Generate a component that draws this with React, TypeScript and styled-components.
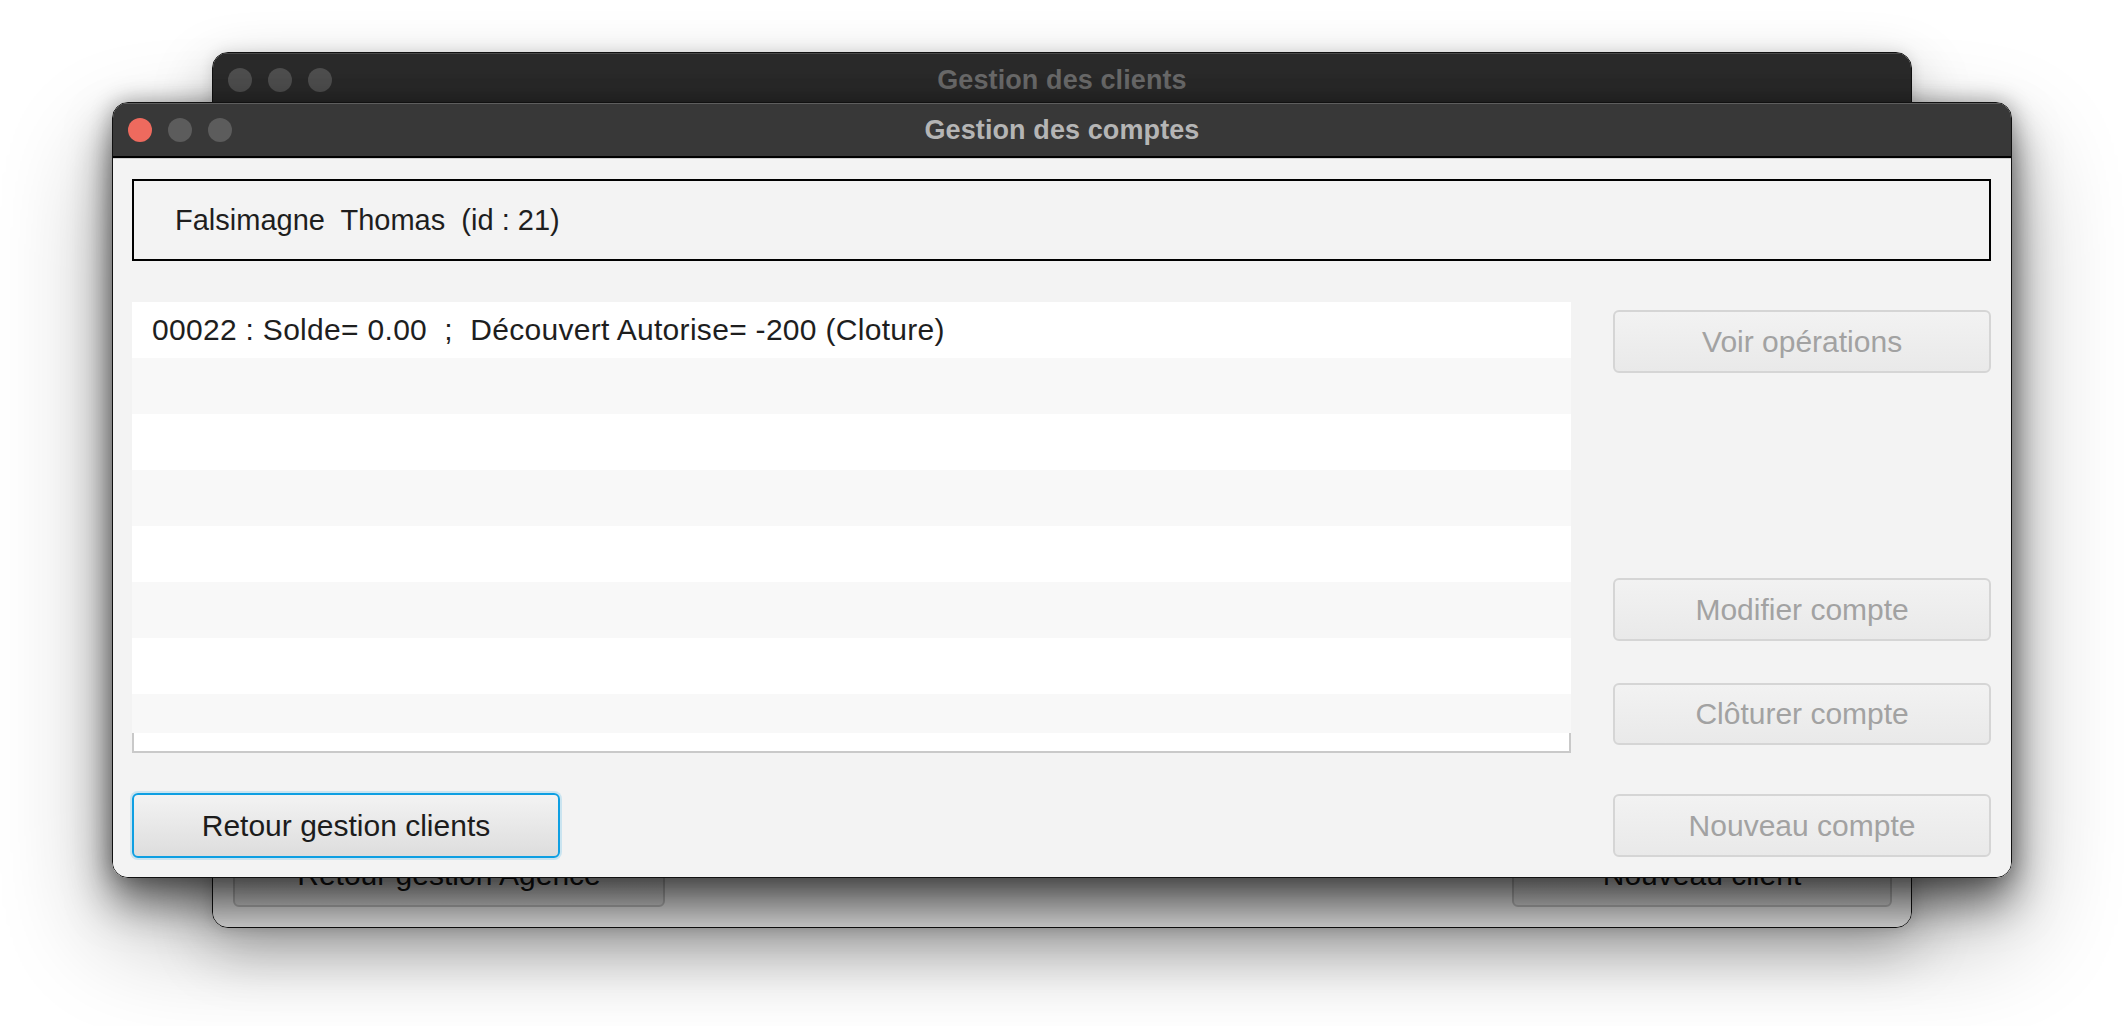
import styled, { createGlobalStyle } from "styled-components";

const GlobalStyle = createGlobalStyle`
  html, body {
    margin: 0;
    padding: 0;
    background: #ffffff;
    font-family: "Liberation Sans", Arial, sans-serif;
  }
  body {
    width: 2124px;
    height: 1026px;
    overflow: hidden;
  }
`;

const Desktop = styled.div`
  position: relative;
  width: 2124px;
  height: 1026px;
  background: #ffffff;
`;

const Window = styled.div<{ $left: number; $top: number; $width: number; $height: number; $front?: boolean }>`
  position: absolute;
  left: ${(p) => p.$left}px;
  top: ${(p) => p.$top}px;
  width: ${(p) => p.$width}px;
  height: ${(p) => p.$height}px;
  display: flex;
  flex-direction: column;
  border-radius: 16px;
  overflow: hidden;
  box-sizing: border-box;
  border: 1px solid #111;
  z-index: ${(p) => (p.$front ? 2 : 1)};
  box-shadow: ${(p) =>
    p.$front
      ? "0 24px 44px rgba(0,0,0,0.55), 0 50px 110px rgba(0,0,0,0.32), 0 0 22px rgba(0,0,0,0.3)"
      : "0 22px 60px rgba(0,0,0,0.28), 0 0 14px rgba(0,0,0,0.12)"};
`;

const TitleBar = styled.div<{ $front?: boolean }>`
  flex: none;
  height: 55px;
  display: grid;
  grid-template-columns: 1fr auto 1fr;
  align-items: center;
  background: ${(p) => (p.$front ? "#383838" : "#2a2a2a")};
  border-top: 1px solid ${(p) => (p.$front ? "#5e5e5e" : "#4a4a4a")};
  border-bottom: 2px solid #000;
  box-sizing: border-box;
`;

const Lights = styled.div`
  display: flex;
  gap: 16px;
  padding-left: 15px;
`;

const Light = styled.span<{ $color: string }>`
  width: 24px;
  height: 24px;
  border-radius: 50%;
  background: ${(p) => p.$color};
`;

const Title = styled.div<{ $front?: boolean }>`
  font-size: 27px;
  font-weight: 700;
  color: ${(p) => (p.$front ? "#b5b5b5" : "#6b6b6b")};
  letter-spacing: 0.1px;
`;

const Body = styled.div`
  flex: 1;
  display: flex;
  flex-direction: column;
  background: #f3f3f3;
  border-top: 1px solid #cfcfcf;
  padding: 20px 20px 20px 19px;
  box-sizing: border-box;
`;

const BackBody = styled(Body)`
  justify-content: flex-end;
  padding: 20px 19px 20px 20px;
`;

const ClientBox = styled.div`
  height: 82px;
  border: 2px solid #000;
  box-sizing: border-box;
  display: flex;
  align-items: center;
  padding-left: 41px;
  font-size: 29px;
  color: #1e1e1e;
  white-space: pre;
`;

const Main = styled.div`
  margin-top: 41px;
  height: 451px;
  display: flex;
  gap: 42px;
`;

const AccountList = styled.div`
  width: 1440px;
  display: flex;
  flex-direction: column;
`;

const Row = styled.div<{ $odd?: boolean; $h?: number }>`
  flex: none;
  height: ${(p) => p.$h ?? 56}px;
  background: ${(p) => (p.$odd ? "#f8f8f8" : "#ffffff")};
  display: flex;
  align-items: center;
  padding-left: 20px;
  font-size: 30px;
  letter-spacing: 0.3px;
  color: #1e1e1e;
  white-space: pre;
`;

const ListFiller = styled.div`
  flex: 1;
  background: #ffffff;
  border: 2px solid #c9c9c9;
  border-top: none;
`;

const SideColumn = styled.div`
  width: 378px;
  display: flex;
  flex-direction: column;
  padding: 8px 0;
  box-sizing: border-box;
`;

const Button = styled.button<{ $kind?: "disabled" | "focused" | "plain"; $w?: number; $h?: number; $push?: boolean; $gap?: number }>`
  flex: none;
  width: ${(p) => (p.$w ? `${p.$w}px` : "100%")};
  height: ${(p) => p.$h ?? 63}px;
  margin-top: ${(p) => (p.$push ? "auto" : `${p.$gap ?? 0}px`)};
  font-family: "Liberation Sans", Arial, sans-serif;
  font-size: 30px;
  border-radius: 6px;
  box-sizing: border-box;
  cursor: default;
  ${(p) =>
    p.$kind === "focused"
      ? `
    color: #1c1c1c;
    background: linear-gradient(#f3f3f3, #dddddd);
    border: 2px solid #0e9fe2;
    box-shadow: 0 0 0 2px rgba(14, 159, 226, 0.18);
  `
      : p.$kind === "plain"
      ? `
    color: #151515;
    background: linear-gradient(#efefef, #e2e2e2);
    border: 2px solid #c2c2c2;
  `
      : `
    color: #a2a2a2;
    background: linear-gradient(#f2f2f2, #e9e9e9);
    border: 2px solid #d5d5d5;
  `}
`;

const BottomRow = styled.div`
  margin-top: 40px;
  display: flex;
  justify-content: space-between;
  align-items: center;
`;

const rows = 7;

export default function App() {
  return (
    <>
      <GlobalStyle />
      <Desktop>
        <Window $left={212} $top={52} $width={1700} $height={876}>
          <TitleBar>
            <Lights>
              <Light $color="#4f4f4f" />
              <Light $color="#4f4f4f" />
              <Light $color="#4f4f4f" />
            </Lights>
            <Title>Gestion des clients</Title>
          </TitleBar>
          <BackBody>
            <BottomRow>
              <Button $kind="plain" $w={432} $h={65}>
                Retour gestion Agence
              </Button>
              <Button $kind="plain" $w={380} $h={65}>
                Nouveau client
              </Button>
            </BottomRow>
          </BackBody>
        </Window>

        <Window $left={112} $top={102} $width={1900} $height={776} $front>
          <TitleBar $front>
            <Lights>
              <Light $color="#ee6a5e" />
              <Light $color="#5c5c5c" />
              <Light $color="#5c5c5c" />
            </Lights>
            <Title $front>Gestion des comptes</Title>
          </TitleBar>
          <Body>
            <ClientBox>Falsimagne  Thomas  (id : 21)</ClientBox>
            <Main>
              <AccountList>
                <Row>00022 : Solde= 0.00  ;  Découvert Autorise= -200 (Cloture)</Row>
                {Array.from({ length: rows - 1 }, (_, i) => (
                  <Row key={i} $odd={i % 2 === 0} />
                ))}
                <Row $odd $h={39} />
                <ListFiller />
              </AccountList>
              <SideColumn>
                <Button disabled $kind="disabled">Voir opérations</Button>
                <Button disabled $kind="disabled" $push>Modifier compte</Button>
                <Button disabled $kind="disabled" $gap={42} $h={62}>Clôturer compte</Button>
              </SideColumn>
            </Main>
            <BottomRow>
              <Button $kind="focused" $w={428} $h={65}>Retour gestion clients</Button>
              <Button disabled $kind="disabled" $w={378} $h={63}>Nouveau compte</Button>
            </BottomRow>
          </Body>
        </Window>
      </Desktop>
    </>
  );
}
